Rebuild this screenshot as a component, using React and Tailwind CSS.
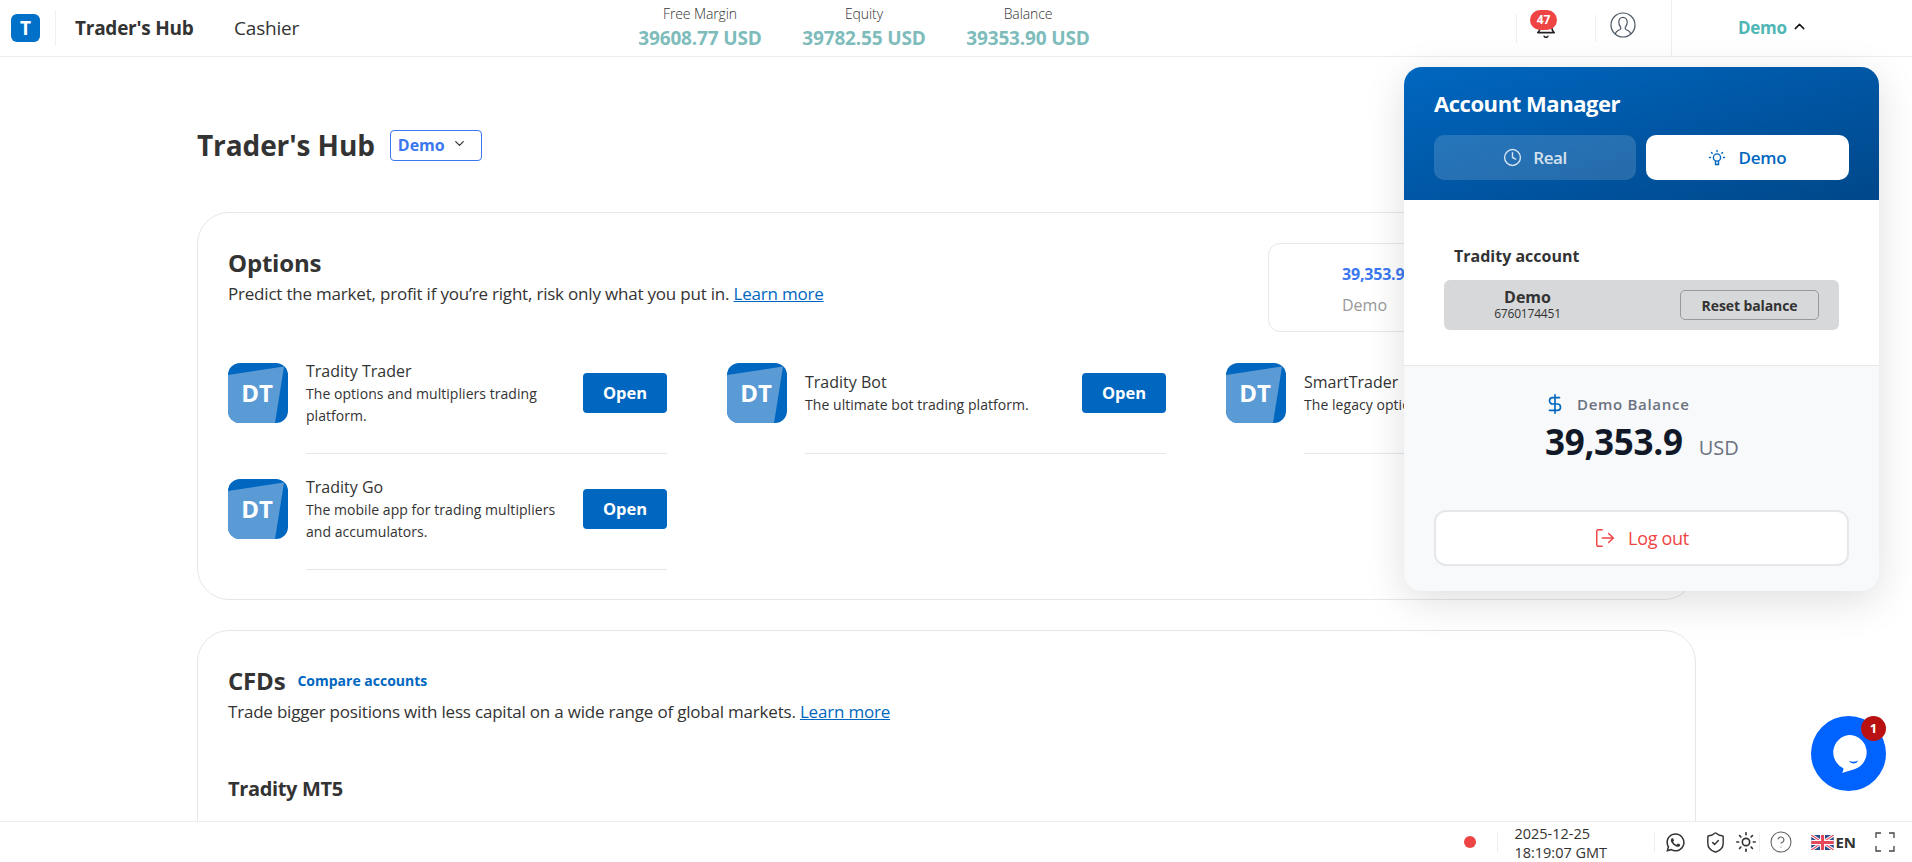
import React from "react";
import { Clock, DollarSign, LogOut, ChevronDown, ChevronUp, ShieldCheck, Sun, CircleHelp } from "lucide-react";
import { FaWhatsapp } from "react-icons/fa";

function Tile({ title, lines }) {
  return (
    <div className="flex gap-[18px]">
      <div className="relative flex h-[60px] w-[60px] shrink-0 items-center justify-center overflow-hidden rounded-[12px] bg-[#0067c0]">
        <svg className="absolute inset-0" width="60" height="60" viewBox="0 0 60 60">
          <polygon points="0,12 56,3.5 47,60 0,60" fill="#5b9bd5" />
        </svg>
        <span className="relative pr-[2px] text-[24px] font-bold text-white">DT</span>
      </div>
      <div className="h-[91px] flex-1 border-b border-[#e5e7eb]">
        <div className="flex h-[60px] items-center justify-between">
          <div className="w-[265px]">
            <div className="text-[16px] leading-[24px] text-[#333]">{title}</div>
            <div className="text-[14px] leading-[22px] text-[#333] tracking-[0.05px]">{lines}</div>
          </div>
          <button className="h-[40px] w-[84px] rounded-[4px] bg-[#0067c0] text-[16.5px] font-bold text-white">Open</button>
        </div>
      </div>
    </div>
  );
}

function Stat({ label, value }) {
  return (
    <div className="w-[164px] pb-[2px] text-center">
      <div className="text-[14px] font-light leading-[18px] text-[#333] tracking-[-0.1px]">{label}</div>
      <div className="mt-[3px] text-[19px] font-bold leading-[24px] text-[#7ebcbc] tracking-[-0.15px]">{value}</div>
    </div>
  );
}

function UKFlag() {
  return (
    <svg width="23" height="15" viewBox="0 0 60 40">
      <rect width="60" height="40" fill="#2b4a8b" />
      <path d="M0 0L60 40M60 0L0 40" stroke="#fff" strokeWidth="8" />
      <path d="M0 0L60 40M60 0L0 40" stroke="#e8495a" strokeWidth="3" />
      <path d="M30 0V40M0 20H60" stroke="#fff" strokeWidth="13" />
      <path d="M30 0V40M0 20H60" stroke="#e8495a" strokeWidth="8" />
    </svg>
  );
}

export default function App() {
  return (
    <div className="relative flex h-[862px] w-[1912px] flex-col overflow-hidden bg-white font-['Open_Sans','Noto_Sans',sans-serif] text-[#333]">
      {/* Top bar */}
      <header className="flex h-[57px] shrink-0 items-center border-b border-[#eeeeee]">
        <div className="flex w-[618px] items-center">
          <div className="ml-[11px] flex h-[28px] w-[29px] items-center justify-center rounded-[6px] bg-[#0070c8] text-[19px] font-bold text-white">T</div>
          <div className="ml-[15px] h-[36px] w-px bg-[#f0f0f0]" />
          <div className="ml-[19px] w-[159px] text-[19px] font-bold tracking-[-0.25px] text-[#333]">Trader's Hub</div>
          <div className="text-[19px] tracking-[-0.2px] text-[#333]">Cashier</div>
        </div>
        <div className="flex">
          <Stat label="Free Margin" value="39608.77 USD" />
          <Stat label="Equity" value="39782.55 USD" />
          <Stat label="Balance" value="39353.90 USD" />
        </div>
        <div className="ml-[406px] flex h-full items-center">
          <div className="h-[29px] w-px bg-[#eeeeee]" />
          <div className="relative flex w-[78px] pl-[18px]">
            <svg width="22" height="22" viewBox="0 0 24 24" fill="none" stroke="#222" strokeWidth="1.8" strokeLinecap="round" strokeLinejoin="round">
              <path d="M6 8a6 6 0 0 1 12 0c0 7 3 9 3 9H3s3-2 3-9" />
              <path d="M10 21a2.2 2.2 0 0 0 4 0" />
            </svg>
            <span className="absolute left-[13px] top-[-7px] flex h-[20px] w-[27px] items-center justify-center rounded-full bg-[#ef4444] text-[12px] font-bold text-white">47</span>
          </div>
          <div className="h-[27px] w-px bg-[#eeeeee]" />
          <div className="mb-[6px] flex w-[75px] pl-[14px]">
            <svg width="26" height="26" viewBox="0 0 26 26" fill="none" stroke="#4b5563" strokeWidth="1.2">
              <circle cx="13" cy="13" r="12" />
              <path d="M5.5 22c0-3 2.5-3.5 4.5-4.5 1-.6 1-1.8.4-2.6-1-1.3-1.6-2.8-1.6-4.6 0-2.8 1.8-5 4.2-5s4.2 2.2 4.2 5c0 1.8-.6 3.3-1.6 4.6-.6.8-.6 2 .4 2.6 2 1 4.5 1.5 4.5 4.5" />
            </svg>
          </div>
          <div className="h-full w-px bg-[#eeeeee]" />
          <div className="ml-[66px] flex items-center gap-[4px] text-[17px] font-bold text-[#4fb6b6] tracking-[-0.3px]">
            Demo <ChevronUp size={17} color="#111" strokeWidth={2} className="mb-[4px]" />
          </div>
        </div>
      </header>

      {/* Main */}
      <main className="min-h-0 flex-1 overflow-hidden pl-[197px]">
        <div className="flex h-[128px] items-center gap-[15px] pt-[48px]">
          <h1 className="text-[28px] font-bold tracking-[-0.1px] text-[#333]">Trader's Hub</h1>
          <div className="flex h-[31px] w-[92px] items-center rounded-[4px] border border-[#3b78f0] pl-[7px] text-[16px] font-bold text-[#3b78f0]">
            Demo <ChevronDown size={15} color="#333" className="mb-[3px] ml-[7px]" />
          </div>
        </div>

        <section className="mt-[27px] w-[1499px] rounded-[32px] border border-[#e5e7eb] pb-[29px] pl-[30px] pt-[30px]">
          <div className="flex justify-between pr-[29px]">
            <div className="pt-[4px]">
              <h2 className="text-[24px] font-bold leading-[32px] tracking-[-0.2px] text-[#333]">Options</h2>
              <p className="mt-[3px] text-[17px] leading-[24px] tracking-[-0.2px]">
                Predict the market, profit if you’re right, risk only what you put in.{" "}
                <a className="text-[#0067c0] underline">Learn more</a>
              </p>
            </div>
            <div className="h-[89px] w-[398px] rounded-[12px] border border-[#e5e7eb] pl-[73px] pt-[18px]">
              <div className="text-[16px] font-bold leading-[24px] text-[#3b78f0] tracking-[-0.2px]">39,353.90 USD</div>
              <div className="mt-[7px] text-[16px] leading-[24px] text-[#999]">Demo</div>
            </div>
          </div>
          <div className="mt-[31px] grid w-[1437px] grid-cols-3 gap-x-[60px] gap-y-[25px]">
            <Tile title="Tradity Trader" lines={<>The options and multipliers trading<br />platform.</>} />
            <Tile title="Tradity Bot" lines="The ultimate bot trading platform." />
            <Tile title="SmartTrader" lines="The legacy options trading platform." />
            <Tile title="Tradity Go" lines={<>The mobile app for trading multipliers<br />and accumulators.</>} />
          </div>
        </section>

        <section className="mt-[30px] h-[400px] w-[1499px] rounded-[32px] border border-[#e5e7eb] pl-[30px] pt-[34px]">
          <div className="flex items-baseline gap-[12px]">
            <h2 className="text-[24px] font-bold leading-[32px] tracking-[-0.2px] text-[#333]">CFDs</h2>
            <a className="relative top-[-4px] text-[14px] font-bold text-[#0067c0]">Compare accounts</a>
          </div>
          <p className="mt-[3px] text-[17px] leading-[24px] tracking-[-0.2px]">
            Trade bigger positions with less capital on a wide range of global markets.{" "}
            <a className="text-[#0067c0] underline">Learn more</a>
          </p>
          <h3 className="mt-[51px] text-[20px] font-bold leading-[28px] tracking-[-0.35px] text-[#333]">Tradity MT5</h3>
        </section>
      </main>

      {/* Footer */}
      <footer className="flex h-[41px] shrink-0 items-center justify-end border-t border-[#eeeeee] bg-white pr-[17px]">
        <div className="h-[12px] w-[12px] rounded-full bg-[#ef4444]" />
        <div className="ml-[21px] h-[20px] w-px bg-[#eeeeee]" />
        <div className="ml-[16px] w-[140px] pt-[1px] text-[14.5px] leading-[19px] text-[#333]">
          <div>2025-12-25</div>
          <div>18:19:07 GMT</div>
        </div>
        <div className="h-[20px] w-px bg-[#eeeeee]" />
        <FaWhatsapp size={21} color="#333" className="ml-[10px]" />
        <ShieldCheck size={23} color="#333" strokeWidth={1.5} className="ml-[18px]" />
        <Sun size={22} color="#333" strokeWidth={1.8} className="ml-[8px]" />
        <div className="ml-[2px] h-[20px] w-px bg-[#eeeeee]" />
        <CircleHelp size={24} color="#666" strokeWidth={1.1} className="ml-[9px]" />
        <div className="ml-[18px]"><UKFlag /></div>
        <span className="ml-px text-[15px] font-bold">EN</span>
        <svg className="ml-[19px]" width="20" height="20" viewBox="0 0 20 20" fill="none" stroke="#444" strokeWidth="1.3">
          <path d="M1 6V1H6M14 1H19V6M19 14V19H14M6 19H1V14" />
        </svg>
      </footer>

      {/* Account manager dropdown */}
      <div className="absolute left-[1404px] top-[67px] flex h-[524px] w-[475px] flex-col overflow-hidden rounded-[18px] bg-[#f8f9fb] shadow-[0_10px_40px_rgba(0,0,0,0.13)]">
        <div className="h-[133px] bg-gradient-to-br from-[#0067c0] to-[#00478a] px-[30px] pt-[21px]">
          <div className="text-[22px] font-bold leading-[30px] text-white tracking-[-0.45px]">Account Manager</div>
          <div className="mt-[17px] flex gap-[10px]">
            <div className="flex h-[45px] w-[202px] items-center justify-center gap-[11px] rounded-[10px] bg-white/15 text-[17px] font-semibold text-white/80 tracking-[-0.4px]">
              <Clock size={19} strokeWidth={1.8} /> Real
            </div>
            <div className="flex h-[45px] w-[203px] items-center justify-center gap-[12px] rounded-[10px] bg-white text-[17px] font-semibold text-[#0067c0] tracking-[-0.2px]">
              <svg width="18" height="18" viewBox="0 0 18 18" fill="none" stroke="#0067c0" strokeWidth="1.4" strokeLinecap="round">
                <circle cx="9" cy="8.5" r="3.6" />
                <path d="M7.5 12.5V15.5H10.5V12.5" />
                <path d="M9 1.5V2.5M3.5 3.5L4.2 4.2M14.5 3.5L13.8 4.2M1.5 8.5H2.5M15.5 8.5H16.5" />
              </svg>
              Demo
            </div>
          </div>
        </div>
        <div className="h-[166px] border-b border-[#e5e7eb] bg-white px-[40px] pt-[44px]">
          <div className="pl-[10px] text-[16px] font-bold leading-[24px] text-[#333]">Tradity account</div>
          <div className="mt-[12px] flex h-[50px] w-[395px] items-center justify-between rounded-[6px] bg-[#d6d8d9] pl-[50px] pr-[20px]">
            <div className="w-[67px] text-center">
              <div className="text-[16px] font-bold leading-[18px] text-[#333]">Demo</div>
              <div className="-mx-[10px] whitespace-nowrap text-[12px] leading-[16px] text-[#333] tracking-[-0.2px]">6760174451</div>
            </div>
            <button className="h-[30px] w-[139px] rounded-[5px] border border-[#999] text-[14px] font-bold text-[#333] tracking-[-0.1px]">Reset balance</button>
          </div>
        </div>
        <div className="flex flex-1 flex-col px-[30px] pt-[25px]">
          <div className="flex items-center pl-[110px]">
            <DollarSign size={22} color="#0067c0" strokeWidth={1.8} />
            <span className="ml-[11px] text-[15px] font-semibold leading-[26px] tracking-[0.7px] text-[#6b7280]">Demo Balance</span>
          </div>
          <div className="flex items-baseline pl-[111px]">
            <span className="text-[35px] font-bold leading-[50px] text-[#111827] tracking-[-0.3px]">39,353.9</span>
            <span className="ml-[16px] text-[20px] text-[#6b7280]">USD</span>
          </div>
          <button className="mt-[43px] flex h-[56px] w-[415px] items-center justify-center gap-[12px] rounded-[12px] border-2 border-[#e5e7eb] bg-white text-[18px] font-medium text-[#ef4444] tracking-[-0.3px]">
            <LogOut size={22} strokeWidth={1.6} /> Log out
          </button>
        </div>
      </div>

      {/* Chat widget */}
      <div className="absolute left-[1811px] top-[716px] flex h-[75px] w-[75px] items-center justify-center rounded-full bg-[#0062ff]">
        <svg width="38" height="40" viewBox="0 0 38 40">
          <path d="M19 1a17.5 17.5 0 0 1 6 34c-4 1.6-9 2.5-13 4 1-1.5 1.5-3 1.4-4.7A17.5 17.5 0 0 1 19 1z" fill="#fff" />
          <path d="M19 27c3 1 6 1 9-.5-1 3.5-7 4-9 .5z" fill="#0062ff" />
        </svg>
        <span className="absolute left-[50px] top-0 flex h-[25px] w-[25px] items-center justify-center rounded-full bg-[#b91111] text-[13px] font-bold text-white">1</span>
      </div>
    </div>
  );
}
